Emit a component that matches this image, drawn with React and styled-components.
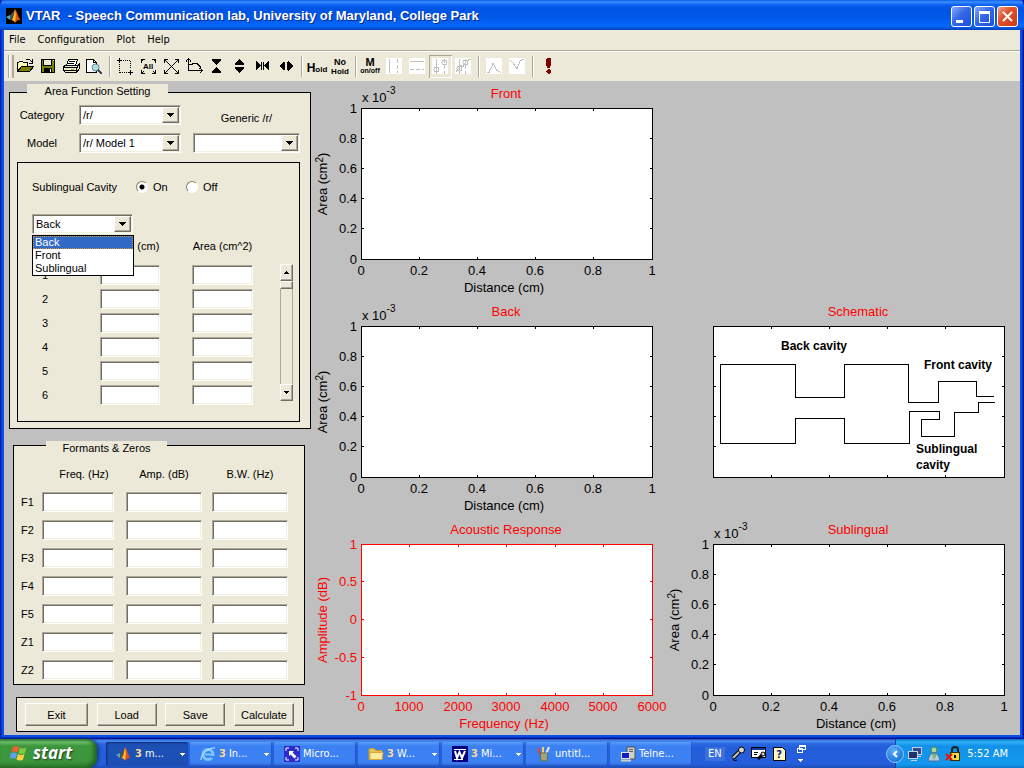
import React, { useState } from "react";
import styled, { createGlobalStyle, css } from "styled-components";

const face = "#ece9d8";
const uiFont = '"Liberation Sans", Arial, sans-serif';
const shellFont = '"DejaVu Sans Condensed", "DejaVu Sans", sans-serif';

const GlobalStyle = createGlobalStyle`
  * { box-sizing: border-box; }
  body { margin: 0; background: #c0c0c0; font: 11px/14px ${uiFont}; color: #000; }
  button, input, select { font: inherit; color: inherit; border-radius: 0; }
  svg { display: block; }
`;

const sunken = css`
  border: 1px solid;
  border-color: #aca899 #fff #fff #aca899;
  box-shadow: inset 1px 1px #716f64, inset -1px -1px #f1efe2;
`;
const raised = css`
  background: ${face};
  border: 1px solid;
  border-color: #fff #716f64 #716f64 #fff;
  box-shadow: inset -1px -1px #aca899;
`;

/* ---------- window ---------- */
const Desktop = styled.div`
  min-height: 100vh;
  display: flex;
  flex-direction: column;
`;
const Window = styled.main`
  flex: 1;
  display: flex;
  flex-direction: column;
  padding: 0 4px 4px;
  background: #0a50e4;
  box-shadow: inset 1px 0 #0a1fb4, inset 2px 0 #0838d0, inset -1px 0 #00138c, inset -2px 0 #0830c8, inset 0 -1px #00138c, inset 0 -2px #0830c8;
`;
const TitleBar = styled.header`
  height: 30px;
  margin: 0 -4px;
  padding: 2px 6px 0;
  display: flex;
  align-items: center;
  gap: 4px;
  border-radius: 6px 6px 0 0;
  background: linear-gradient(#0a5ce8 0, #3c8efc 2px, #0a5ff0 5px, #0054e3 9px, #0058ea 18px, #0668fc 26px, #0454dc 28px, #0340b8 30px);
`;
const Title = styled.h1`
  flex: 1;
  margin: 0;
  font: bold 13px/16px ${uiFont};
  white-space: pre;
  color: #fff;
  text-shadow: 1px 1px #0a2a8c;
`;
const CaptionButtons = styled.div`
  display: flex;
  gap: 2px;
`;
const CaptionButton = styled.button`
  width: 21px;
  height: 21px;
  padding: 0;
  display: grid;
  place-items: center;
  border: 1px solid #fff;
  border-radius: 3px;
  background: ${(p) =>
    p.$close
      ? "linear-gradient(135deg, #f0a088, #e2502c 40%, #c83c14)"
      : "linear-gradient(135deg, #86a8f4, #3468e8 45%, #1c50d8)"};
`;
const MenuBar = styled.nav`
  height: 20px;
  padding: 0 5px;
  display: flex;
  align-items: center;
  gap: 12px;
  background: ${face};
`;
const MenuItem = styled.button`
  padding: 0;
  border: 0;
  background: none;
  font: 11px/16px ${shellFont};
`;
const ToolBar = styled.div`
  height: 31px;
  padding: 0 4px;
  display: flex;
  align-items: center;
  background: ${face};
  border-top: 1px solid #aca899;
  box-shadow: inset 0 1px #fff;
`;
const Gripper = styled.span`
  width: 6px;
  height: 23px;
  border: solid #aca899;
  border-width: 0 1px;
  border-right-width: 2px;
  box-shadow: inset 1px 0 #fff;
`;
const Divider = styled.span`
  width: 2px;
  height: 21px;
  margin: 0 3px;
  border-left: 1px solid #aca899;
  border-right: 1px solid #fff;
`;
const Tool = styled.button`
  width: 23px;
  height: 23px;
  padding: 0;
  border: 0;
  background: none;
  box-shadow: ${(p) => (p.$pressed ? "inset 1px 1px #aca899, inset -1px -1px #fff" : "none")};
`;

const Workspace = styled.div`
  flex: 1;
  padding: 3px 2px 2px 5px;
  display: grid;
  grid-template-columns: 302px minmax(0, 1fr);
  column-gap: 3px;
  align-items: start;
  background: #c0c0c0;
`;

/* ---------- left side ---------- */
const SideColumn = styled.section`
  display: flex;
  flex-direction: column;
  gap: 12px;
`;
const Group = styled.fieldset`
  min-width: 0;
  margin: 0;
  border: 1px solid #000;
  background: ${face};
`;
const Legend = styled.legend`
  padding: 0;
  line-height: 14px;
  background: ${face};
`;
const LegendText = styled.span`
  display: block;
  text-align: center;
`;
const AreaGroup = styled(Group)`
  padding: 5px 10px 6px 7px;
  ${Legend} { width: 141px; height: 16px; margin-left: 10px; }
`;
const FormantGroup = styled(Group)`
  margin: 0 6px 0 4px;
  padding: 0 7px;
  ${Legend} { width: 121px; height: 8px; margin-left: 25px; }
`;
const ModelGrid = styled.div`
  display: grid;
  grid-template-columns: 50px 102px 1fr;
  gap: 8px 12px;
  align-items: center;
  text-align: center;
`;
const LowLabel = styled.label`
  align-self: end;
`;
const SelectBox = styled.span`
  display: grid;
  grid-template-columns: 1fr 19px;
  width: ${(p) => p.$width || "auto"};
  height: 20px;
`;
const SelectField = styled.select`
  ${sunken}
  grid-area: 1 / 1 / 2 / 3;
  appearance: none;
  width: 100%;
  padding: 0 20px 0 3px;
  background: #fff;
`;
const SelectArrow = styled.span`
  ${raised}
  grid-area: 1 / 2;
  margin: 2px 2px 2px 0;
  display: grid;
  place-items: center;
  pointer-events: none;
`;
const CavityBox = styled.div`
  margin-top: 9px;
  padding: 12px 6px 14px 14px;
  border: 1px solid #000;
`;
const RadioRow = styled.div`
  height: 24px;
  margin-bottom: 15px;
  display: flex;
  align-items: center;
`;
const RadioTitle = styled.span`
  width: 104px;
`;
const RadioLabel = styled.label`
  width: 50px;
  display: flex;
  align-items: center;
  gap: 5px;
`;
const Radio = styled.input`
  appearance: none;
  width: 12px;
  height: 12px;
  margin: 0;
  border-radius: 50%;
  border: 1px solid;
  border-color: #84806c #fff #fff #84806c;
  background: ${(p) => (p.checked ? "radial-gradient(circle, #000 0 2px, #fff 3px)" : "#fff")};
`;
const Combo = styled.div`
  position: relative;
  width: 101px;
`;
const Popup = styled.ul`
  position: absolute;
  z-index: 2;
  top: 21px;
  left: 0;
  width: 102px;
  margin: 0;
  padding: 0;
  list-style: none;
  border: 1px solid #000;
  background: #fff;
`;
const Option = styled.li`
  padding: 0 2px;
  line-height: 13px;
  color: ${(p) => (p.$on ? "#fff" : "#000")};
  background: ${(p) => (p.$on ? "#316ac5" : "#fff")};
  outline: ${(p) => (p.$on ? "1px dotted #ce953a" : "none")};
  outline-offset: -1px;
`;
const SectionRow = styled.div`
  display: flex;
  justify-content: space-between;
`;
const FieldTable = styled.table`
  table-layout: fixed;
  border-collapse: collapse;
  th, td { padding: 0; font-weight: normal; }
`;
const SectionTable = styled(FieldTable)`
  width: 221px;
  thead th { height: 29px; padding-top: 5px; vertical-align: top; }
  tbody th, td { height: 24px; }
  tbody th { padding-left: 10px; text-align: left; }
  tr > :nth-child(2) { padding-right: 32px; }
`;
const FormantTable = styled(FieldTable)`
  width: 267px;
  thead th { height: 39px; padding-top: 10px; }
  tbody th, td { height: 28px; }
  tbody th { text-align: left; }
  td:nth-child(2) { padding-right: 12px; }
  tr > :nth-child(3) { padding-right: 10px; }
`;
const Col = styled.col`
  width: ${(p) => p.$w}px;
`;
const Nowrap = styled.span`
  display: flex;
  justify-content: center;
  white-space: nowrap;
`;
const Field = styled.input`
  ${sunken}
  display: block;
  width: 100%;
  height: 20px;
  padding: 0 3px;
  background: #fff;
`;
const Scroll = styled.div`
  width: 13px;
  margin: 30px 0 6px;
  display: flex;
  flex-direction: column;
  border: solid #aca899;
  border-width: 0 1px;
`;
const ScrollButton = styled.button`
  ${raised}
  height: 17px;
  margin: 0 -1px;
  padding: 0;
  display: grid;
  place-items: center;
`;
const Thumb = styled.span`
  ${raised}
  height: 8px;
  margin: 0 -1px auto;
`;
const ActionBar = styled.div`
  margin: 0 7px;
  padding: 5px 9px 5px 8px;
  display: flex;
  justify-content: space-between;
  border: 1px solid #000;
  background: ${face};
`;
const ActionButton = styled.button`
  ${raised}
  width: ${(p) => (p.$wide ? 63 : 60)}px;
  height: 23px;
  padding: 0;
`;

/* ---------- plots ---------- */
const PlotGrid = styled.section`
  margin-top: -3px;
  display: grid;
  grid-template-columns: repeat(2, minmax(0, 1fr));
  row-gap: 2px;
`;
const PlotCell = styled.figure`
  margin: 0;
  grid-area: ${(p) => `${p.$row} / ${p.$col}`};
`;
const PlotSvg = styled.svg`
  width: 100%;
  height: auto;
  overflow: visible;
  font: 13px ${uiFont};
`;

const frame = { x: 47, y: 27, w: 291, h: 151 };

function Plot({ row, col, title, xLabel, yLabel, xTicks, yTicks, exponent, ink = "#000", children }) {
  const { x, y, w, h } = frame;
  const px = (i) => Math.floor(x + (w * i) / (xTicks.length - 1));
  const py = (i) => Math.floor(y + h - (h * i) / (yTicks.length - 1));
  return (
    <PlotCell $row={row} $col={col}>
      <PlotSvg viewBox="0 0 352 216" role="img" aria-label={title}>
        <g shapeRendering="crispEdges" stroke={ink} fill="none">
          <rect x={x + 0.5} y={y + 0.5} width={w} height={h} fill="#fff" />
          {xTicks.map((t, i) => (
            <path key={i} d={`M${px(i) + 0.5} ${y}v3M${px(i) + 0.5} ${y + h + 1}v-3`} />
          ))}
          {yTicks.map((t, i) => (
            <path key={i} d={`M${x} ${py(i) + 0.5}h3M${x + w + 1} ${py(i) + 0.5}h-3`} />
          ))}
        </g>
        <text x="192" y="17" textAnchor="middle" fill="#f00">{title}</text>
        {exponent && (
          <text x="48" y="21">
            x 10<tspan dy="-8" fontSize="10">{exponent}</tspan>
          </text>
        )}
        <g fill={ink}>
          {xTicks.map((t, i) => t && (
            <text key={i} x={px(i)} y="194" textAnchor="middle">{t}</text>
          ))}
          {yTicks.map((t, i) => t && (
            <text key={i} x="43" y={py(i) + 5} textAnchor="end">{t}</text>
          ))}
          {xLabel && <text x="190" y="211" textAnchor="middle">{xLabel}</text>}
          {yLabel && (
            <text transform="translate(13 103) rotate(-90)" textAnchor="middle">{yLabel}</text>
          )}
        </g>
        {children}
      </PlotSvg>
    </PlotCell>
  );
}

const unitX = ["0", "0.2", "0.4", "0.6", "0.8", "1"];
const blank = ["", "", "", "", "", ""];
const areaLabel = (
  <>
    Area (cm<tspan dy="-4" fontSize="10">2</tspan>
    <tspan dy="4">)</tspan>
  </>
);

/* ---------- toolbar glyphs ---------- */
const G = ({ children, off }) => (
  <svg width="23" height="23" viewBox="0 0 23 23" fill="none" stroke={off ? "#c0c0c0" : "#000"} shapeRendering="crispEdges">
    {off && <rect x="3" y="3" width="16" height="16" fill="#fff" stroke="none" />}
    {children}
  </svg>
);
const glyphText = { fill: "#000", stroke: "none", fontWeight: "bold", fontFamily: "Liberation Sans, sans-serif" };

const toolGroups = [
  [
    ["Open", <G><path d="M3.5 16.5v-9h1l1-1h3l1 1h4v4" fill="#ffffb0" /><path d="M3.5 16.5l4-5h12l-4 5z" fill="#808000" /><path d="M11.5 5.5l1-1h3l3 3M18.5 4v4h-4" /></G>],
    ["Save", <G><rect x="4.500" y="4.500" width="13" height="13" fill="#808000" /><rect x="6.500" y="4.500" width="8" height="6" fill={face} /><path d="M7 13.500h8M7 14.500h8M7 15.500h8M7 16.500h8" /><path d="M13.500 14v3" stroke="#fff" /><path d="M16.500 5v1" stroke="#fff" /></G>],
    ["Print", <G><path d="M6.500 10.500l2-6h9l-2 6z" fill="#fff" /><path d="M9 6.500h6M8 8.500h6" /><path d="M3.500 11.500l2-1h12l2-2v5l-3 4h-11l-2-2z" fill={face} /><path d="M4 12.500h13l2-3M4 15.500h13M16.500 13v4" /><path d="M11 14.500h3" stroke="#b8a800" /></G>],
    ["Print preview", <G><path d="M3.500 4.500h7l3 3v10h-10z" fill="#fff" /><path d="M10.500 4.500v3h3" /><circle cx="12.500" cy="12.500" r="3.500" fill="#a8e0e8" stroke="#708090" shapeRendering="auto" /><path d="M15 15l4 4" strokeWidth="2" stroke="#404858" /></G>],
  ],
  [
    ["Zoom box", <G><path d="M3 5.500h5M5.500 3v5M14 17.500h5M16.500 15v5" /><path d="M9 5.500h8M5.500 9v9M16.500 6v8M6 17.500h7" strokeDasharray="1 1" /></G>],
    ["Show all", <G><path d="M4.500 8V4.500H8M4.500 4.500l2 2M15 4.500h3.500V8M18.500 4.500l-2 2M4.500 15v3.500H8M4.500 18.500l2-2M15 18.500h3.500V15M18.500 18.500l-2-2" /><text x="11" y="14" fontSize="8" textAnchor="middle" {...glyphText}>All</text></G>],
    ["Expand", <G><path d="M4.500 8V4.500H8M15 4.500h3.500V8M4.500 15v3.500H8M15 18.500h3.500V15M4.500 4.500l14 14M18.500 4.500l-14 14" /></G>],
    ["Axes", <G><path d="M5.500 16V4M3 6.500l2.500-3 2.500 3M5 15.500h14M16.500 13l3 2.500-3 3M6 9.500h3l1-1h4l3 3v2" /></G>],
    ["Compress vertically", <G><path d="M6 4.500h9M6 17.500h9" /><path d="M6 5h9l-4.500 5zM6 17h9l-4.500-5z" fill="#000" stroke="none" /></G>],
    ["Expand vertically", <G><path d="M6 9h9l-4.500-5zM6 13h9l-4.500 5z" fill="#000" stroke="none" /><path d="M6 9.500h9M6 12.500h9" /></G>],
    ["Compress horizontally", <G><path d="M4 6v9l5-4.500zM17 6v9l-5-4.500z" fill="#000" stroke="none" /><path d="M9.500 7v8M11.500 7v8" /></G>],
    ["Expand horizontally", <G><path d="M9 6v10l-5-5zM13 6v10l5-5z" fill="#000" stroke="none" /><path d="M9.500 7v8M12.500 7v8" /></G>],
  ],
  [
    ["Hold", <G><text x="11" y="17" fontSize="12" textAnchor="middle" {...glyphText}>H<tspan fontSize="8">old</tspan></text></G>],
    ["No hold", <G><text x="11" y="10" fontSize="9" textAnchor="middle" {...glyphText}>No</text><text x="11" y="19" fontSize="8" textAnchor="middle" {...glyphText}>Hold</text></G>],
  ],
  [
    ["Markers on/off", <G><text x="10" y="11" fontSize="11" textAnchor="middle" {...glyphText}>M</text><text x="10" y="18" fontSize="7" textAnchor="middle" {...glyphText}>on/off</text></G>],
    ["Vertical cursors", <G off><path d="M6.500 4v14" /><path d="M14.500 4v14" strokeDasharray="4 2" /></G>],
    ["Horizontal cursors", <G off><path d="M4 6.500h14" /><path d="M4 14.500h14" strokeDasharray="4 2" /></G>],
    ["Track", <G off><path d="M7.500 4v15" /><path d="M15.500 4v15" strokeDasharray="4 2" /><circle cx="7.500" cy="14.500" r="2.500" /><circle cx="15.500" cy="7.500" r="2.500" /></G>, true],
    ["Track data", <G off><path d="M7.500 4v15M4 17l5-7 2 2 3-6 5-2" /><path d="M13.500 4v15" strokeDasharray="4 2" /><circle cx="7.500" cy="13.500" r="2.500" /><circle cx="13.500" cy="7.500" r="2.500" /></G>],
  ],
  [
    ["Next peak", <G off><path d="M4 17.500h2l4-9 4 7 4 2" /></G>],
    ["Next valley", <G off><path d="M4 5l3 3 4 6 3-8 4-2" /></G>],
  ],
  [
    ["Stop", <G><path d="M10 3h3l1 1v5l-1 4h-3l-1-4V4zM11 14h1l2 2v1l-2 2h-1l-2-2v-1z" fill="#800000" stroke="none" /></G>],
  ],
];

const MatlabLogo = ({ boxed, size = 16 }) => (
  <svg width={size} height={size} viewBox="0 0 16 16">
    {boxed && <rect width="16" height="16" fill="#000" />}
    <path d="M0 9l4-2 2 2-2 3z" fill="#5ba4b4" />
    <path d="M4 7l3-3 2-3-2 8-3 3z" fill="#35545c" />
    <path d="M9 1c2 2 3 8 6 12-2-2-4-1-6 2-1-2-2-3-4-3 2-1 3-8 4-11z" fill="#d9531e" />
    <path d="M9 2c1 3 1 8 0 12-1-1-2-2-3-2 2-2 2-7 3-10z" fill="#ffc028" />
  </svg>
);
const Triangle = ({ up, fill = "#000", small }) => (
  <svg width={small ? 5 : 7} height={small ? 3 : 4} viewBox={small ? "1 0 5 3" : "0 0 7 4"} shapeRendering="crispEdges">
    {small
      ? <path d={up ? "M3 0h1v1h1v1h1v1H1V2h1V1h1z" : "M1 0h5v1H5v1H4v1H3V2H2V1H1z"} fill={fill} />
      : <path d="M0 0h7v1H6v1H5v1H4v1H3V3H2V2H1V1H0z" fill={fill} />}
  </svg>
);

/* ---------- taskbar ---------- */
const Taskbar = styled.footer`
  height: 30px;
  display: flex;
  align-items: stretch;
  font: 11px/14px ${shellFont};
  color: #fff;
  background: linear-gradient(#1f4fb8 0, #4a8cf4 2px, #2a66e0 5px, #245edb 9px, #245edb 25px, #1c48ac 30px);
`;
const StartButton = styled.button`
  width: 97px;
  padding: 0 0 2px 10px;
  display: flex;
  align-items: center;
  gap: 5px;
  border: 0;
  border-radius: 0 10px 12px 0;
  font: italic bold 17px/24px "Open Sans", "Noto Sans", sans-serif;
  color: #fff;
  text-shadow: 1px 1px 2px #1c401c;
  background: linear-gradient(#2c7c2c 0, #6cbc6c 3px, #3c963c 7px, #3c963c 22px, #2a742a 30px);
  box-shadow: inset -3px -1px 4px #1e601e, 2px 0 3px #173c94;
`;
const Tasks = styled.div`
  flex: 0 1 586px;
  min-width: 0;
  margin-left: 9px;
  display: flex;
  align-items: center;
  gap: 2px;
`;
const Task = styled.button`
  flex: 1;
  min-width: 0;
  height: 24px;
  padding: 0 3px 0 10px;
  display: flex;
  align-items: center;
  gap: 3px;
  border: 0;
  border-radius: 2px;
  white-space: nowrap;
  text-align: left;
  background: ${(p) => (p.$active ? "#1c50b4" : "linear-gradient(#5c9cfc 0, #3c81f3 4px, #3c81f3 20px, #2c68d8 24px)")};
  box-shadow: ${(p) => (p.$active ? "inset 1px 1px 2px #0c2c74" : "inset -1px -1px #2458c4")};
`;
const TaskText = styled.span`
  flex: 1;
`;
const Count = styled.b`
  color: #fcd890;
`;
const LanguageBar = styled.div`
  margin-left: 13px;
  display: flex;
  align-items: center;
  gap: 5px;
`;
const Language = styled.span`
  padding: 0 3px;
  background: #3a70e0;
`;
const Tray = styled.div`
  width: 129px;
  margin-left: auto;
  display: flex;
  align-items: center;
  gap: 3px;
  padding-right: 16px;
  border-left: 1px solid #0c48a0;
  background: linear-gradient(#1070c8 0, #30b0f8 3px, #1290e8 7px, #129aee 25px, #0c70c0 30px);
`;
const TrayToggle = styled.button`
  flex: none;
  width: 18px;
  height: 18px;
  margin-left: -10px;
  padding: 0;
  display: grid;
  place-items: center;
  border: 1px solid #8cc8fc;
  border-radius: 50%;
  background: radial-gradient(circle at 40% 30%, #58b0fc, #0c60d0);
`;
const Clock = styled.time`
  margin-left: auto;
  white-space: nowrap;
`;

const Ico = (p) => <svg width="16" height="16" viewBox="0 0 16 16" {...p} />;
const tasks = [
  { n: "3", text: "m...", more: true, active: true, icon: <MatlabLogo /> },
  { n: "3", text: "In...", more: true, icon: <Ico><circle cx="8" cy="8.500" r="5" fill="none" stroke="#7cc8fc" strokeWidth="3" /><path d="M5 8.500h8" stroke="#7cc8fc" strokeWidth="2" /><path d="M11 10h4v2h-4z" fill="#3c81f3" /><path d="M1 14C0 9 9 1 15 2" fill="none" stroke="#c8ecff" /></Ico> },
  { text: "Micro...", icon: <Ico><rect width="16" height="16" fill="#2c2cc8" /><path d="M2 5V2h3M11 2h3v3M2 11v3h3M11 14h3v-3" stroke="#fff" fill="none" /><path d="M5 5h5L8.500 6.500l4 4-2 2-4-4L5 10z" fill="#fff" /></Ico> },
  { n: "3", text: "W...", more: true, icon: <Ico><path d="M1 3.500l1-1h4l2 2h6v9H1z" fill="#e8c050" stroke="#c89828" /><path d="M2 6.500h13l-1 7H2z" fill="#ffec98" stroke="#d8a838" /></Ico> },
  { n: "3", text: "Mi...", more: true, icon: <Ico><rect width="16" height="16" fill="#00007c" /><path d="M2 3.500h12M2 13.500h9" stroke="#fff" /><path d="M3 5l2 7 2.500-6L10 12l3-7" fill="none" stroke="#fff" strokeWidth="2" /></Ico> },
  { text: "untitl...", icon: <Ico><path d="M4 8l-2-6" stroke="#e84020" strokeWidth="2" /><path d="M7 8V1" stroke="#f8d060" strokeWidth="2" /><path d="M10 8l3-7" stroke="#e8e8e8" strokeWidth="2" /><path d="M4 7h8l-1 8H5z" fill="#90a890" stroke="#586858" /><path d="M7 8v6" stroke="#f09030" /></Ico> },
  { text: "Telne...", icon: <Ico><path d="M7 1h7l1 1v11H7z" fill="#d0d0c8" stroke="#505050" /><path d="M9 3.500h4M9 5.500h4" stroke="#606060" /><rect x="1.500" y="6.500" width="8" height="6" fill="#1020c0" stroke="#e0e0d8" /><path d="M1 14.500h10" stroke="#d0d0c8" strokeWidth="2" /></Ico> },
];

function Choice({ label, id, options, width }) {
  return (
    <SelectBox $width={width}>
      <SelectField id={id} aria-label={label}>
        {options.map((o) => <option key={o}>{o}</option>)}
      </SelectField>
      <SelectArrow><Triangle /></SelectArrow>
    </SelectBox>
  );
}

export default function App() {
  const [cavity, setCavity] = useState("On");
  return (
    <>
      <GlobalStyle />
      <Desktop>
        <Window>
          <TitleBar>
            <MatlabLogo boxed />
            <Title>{"VTAR  - Speech Communication lab, University of Maryland, College Park"}</Title>
            <CaptionButtons>
              <CaptionButton aria-label="Minimize"><svg width="15" height="15"><path d="M2 11h7v3H2z" fill="#fff" /></svg></CaptionButton>
              <CaptionButton aria-label="Maximize"><svg width="15" height="15"><path d="M2.500 3v10.500h10V3" fill="none" stroke="#fff" /><path d="M2 2h11v3H2z" fill="#fff" /></svg></CaptionButton>
              <CaptionButton $close aria-label="Close"><svg width="15" height="15"><path d="M3 3l9 9M12 3l-9 9" stroke="#fff" strokeWidth="2" /></svg></CaptionButton>
            </CaptionButtons>
          </TitleBar>
          <MenuBar>
            {["File", "Configuration", "Plot", "Help"].map((m) => <MenuItem key={m}>{m}</MenuItem>)}
          </MenuBar>
          <ToolBar role="toolbar">
            <Gripper />
            {toolGroups.map((group, i) => (
              <React.Fragment key={i}>
                {i > 0 && <Divider />}
                {group.map(([name, glyph, pressed]) => (
                  <Tool key={name} aria-label={name} $pressed={pressed}>{glyph}</Tool>
                ))}
              </React.Fragment>
            ))}
          </ToolBar>
          <Workspace>
            <SideColumn>
              <AreaGroup>
                <Legend><LegendText>Area Function Setting</LegendText></Legend>
                <ModelGrid>
                  <label htmlFor="category">Category</label>
                  <Choice id="category" options={["/r/"]} />
                  <LowLabel htmlFor="generic">Generic /r/</LowLabel>
                  <label htmlFor="model">Model</label>
                  <Choice id="model" options={["/r/ Model 1"]} />
                  <Choice id="generic" options={[""]} />
                </ModelGrid>
                <CavityBox>
                  <RadioRow role="radiogroup" aria-label="Sublingual Cavity">
                    <RadioTitle>Sublingual Cavity</RadioTitle>
                    {["On", "Off"].map((v) => (
                      <RadioLabel key={v}>
                        <Radio type="radio" name="cavity" checked={cavity === v} onChange={() => setCavity(v)} />
                        {v}
                      </RadioLabel>
                    ))}
                  </RadioRow>
                  <Combo>
                    <Choice label="Cavity section" options={["Back", "Front", "Sublingual"]} width="101px" />
                    <Popup role="listbox" aria-label="Cavity section">
                      {["Back", "Front", "Sublingual"].map((o, i) => (
                        <Option key={o} role="option" aria-selected={i === 0} $on={i === 0}>{o}</Option>
                      ))}
                    </Popup>
                  </Combo>
                  <SectionRow>
                    <SectionTable>
                      <colgroup><Col $w={68} /><Col $w={92} /><Col $w={61} /></colgroup>
                      <thead>
                        <tr><th /><th scope="col"><Nowrap>Length (cm)</Nowrap></th><th scope="col"><Nowrap>Area (cm^2)</Nowrap></th></tr>
                      </thead>
                      <tbody>
                        {[1, 2, 3, 4, 5, 6].map((n) => (
                          <tr key={n}>
                            <th scope="row">{n}</th>
                            <td><Field aria-label={`Length ${n}`} /></td>
                            <td><Field aria-label={`Area ${n}`} /></td>
                          </tr>
                        ))}
                      </tbody>
                    </SectionTable>
                    <Scroll>
                      <ScrollButton aria-label="Scroll up"><Triangle up small /></ScrollButton>
                      <Thumb />
                      <ScrollButton aria-label="Scroll down"><Triangle small /></ScrollButton>
                    </Scroll>
                  </SectionRow>
                </CavityBox>
              </AreaGroup>

              <FormantGroup>
                <Legend><LegendText>Formants &amp; Zeros</LegendText></Legend>
                <FormantTable>
                  <colgroup><Col $w={21} /><Col $w={84} /><Col $w={86} /><Col $w={76} /></colgroup>
                  <thead>
                    <tr><th /><th scope="col">Freq. (Hz)</th><th scope="col">Amp. (dB)</th><th scope="col">B.W. (Hz)</th></tr>
                  </thead>
                  <tbody>
                    {["F1", "F2", "F3", "F4", "F5", "Z1", "Z2"].map((n) => (
                      <tr key={n}>
                        <th scope="row">{n}</th>
                        <td><Field aria-label={`${n} frequency`} /></td>
                        <td><Field aria-label={`${n} amplitude`} /></td>
                        <td><Field aria-label={`${n} bandwidth`} /></td>
                      </tr>
                    ))}
                  </tbody>
                </FormantTable>
              </FormantGroup>

              <ActionBar>
                <ActionButton $wide>Exit</ActionButton>
                <ActionButton>Load</ActionButton>
                <ActionButton>Save</ActionButton>
                <ActionButton>Calculate</ActionButton>
              </ActionBar>
            </SideColumn>

            <PlotGrid>
              <Plot row={1} col={1} title="Front" xLabel="Distance (cm)" yLabel={areaLabel} xTicks={unitX} yTicks={unitX} exponent="-3" />
              <Plot row={2} col={1} title="Back" xLabel="Distance (cm)" yLabel={areaLabel} xTicks={unitX} yTicks={unitX} exponent="-3" />
              <Plot row={2} col={2} title="Schematic" xTicks={blank} yTicks={blank}>
                <path
                  d="M54.500 144.500V65.500H129.500V98.500H178.500V65.500H242.500V103.500H272.500V82.500H310.500V97.500H328M54.500 144.500H129.500V119.500H178.500V144.500H243.500V112.500H273.500V120.500H255.500V137.500H288.500V113.500H312.500V103.500H329"
                  fill="none" stroke="#000" shapeRendering="crispEdges"
                />
                <g fontSize="12" fontWeight="bold">
                  <text x="115" y="51">Back cavity</text>
                  <text x="258" y="70">Front cavity</text>
                  <text x="250" y="154">Sublingual</text>
                  <text x="250" y="170">cavity</text>
                </g>
              </Plot>
              <Plot
                row={3} col={1} ink="#f00" title="Acoustic Response" xLabel="Frequency (Hz)" yLabel="Amplitude (dB)"
                xTicks={["0", "1000", "2000", "3000", "4000", "5000", "6000"]} yTicks={["-1", "-0.5", "0", "0.5", "1"]}
              />
              <Plot row={3} col={2} title="Sublingual" xLabel="Distance (cm)" yLabel={areaLabel} xTicks={unitX} yTicks={unitX} exponent="-3" />
            </PlotGrid>
          </Workspace>
        </Window>

        <Taskbar>
          <StartButton>
            <svg width="18" height="18" viewBox="0 0 18 18">
              <path d="M3 3q3-2 6 0L7.500 8.500q-3-2-6 0z" fill="#f06030" />
              <path d="M10 3.500q3 2 6.500 0L15 9q-3 2-6.500 0z" fill="#80c840" />
              <path d="M1 9.500q3-2 6 0L5.500 15q-2.500-2-6 0z" fill="#60a0f8" />
              <path d="M8 10q3 2 6.500 0L13 15.500q-3 2-6.500 0z" fill="#fcd040" />
            </svg>
            start
          </StartButton>
          <Tasks>
            {tasks.map((t) => (
              <Task key={t.text} $active={t.active}>
                {t.icon}
                {t.n && <Count>{t.n}</Count>}
                <TaskText>{t.text}</TaskText>
                {t.more && <Triangle fill="#fff" small />}
              </Task>
            ))}
          </Tasks>
          <LanguageBar>
            <Language>EN</Language>
            <Ico><path d="M3 12l7-7" stroke="#000" strokeWidth="4" /><path d="M3 12l7-7" stroke="#c8c8c0" strokeWidth="2" /><circle cx="11.500" cy="4" r="3" fill="#d8d8d0" stroke="#000" /><path d="M3 12q0 4 4 2" fill="none" stroke="#000" /></Ico>
            <Ico><rect x="0.500" y="1.500" width="14" height="10" fill="#fff" stroke="#000" /><path d="M1 3h13" stroke="#1838a8" strokeWidth="2" /><path d="M3 6.500h4M3 8.500h3" stroke="#000" /><path d="M7 13l5-5" stroke="#000" strokeWidth="3" /><circle cx="12" cy="8" r="2" fill="#d8d8d0" stroke="#000" /></Ico>
            <Ico><path d="M1.500 1.500h9l3 3v10h-12z" fill="#fff8c0" stroke="#000" /><text x="7" y="12" fontSize="11" fontWeight="bold" textAnchor="middle" fill="#102090">?</text></Ico>
            <svg width="16" height="20" viewBox="0 0 16 20" shapeRendering="crispEdges"><path d="M6.500 1.500h6v4h-6zM6 2h7M4.500 4.500h5v4h-5z" fill="#245edb" stroke="#fff" /><path d="M5 15h5v1H9v1H8v1H7v-1H6v-1H5z" fill="#fff" /></svg>
          </LanguageBar>
          <Tray>
            <TrayToggle aria-label="Show hidden icons"><svg width="8" height="8"><path d="M6 1L3 4l3 3" fill="none" stroke="#fff" strokeWidth="2" /></svg></TrayToggle>
            <Ico><rect x="5.500" y="1.500" width="9" height="7" fill="#304890" stroke="#c8d0e0" /><rect x="1.500" y="5.500" width="9" height="7" fill="#203070" stroke="#c8d0e0" /><path d="M4 14.500h6M10 10.500h4" stroke="#c8d0e0" /></Ico>
            <Ico><circle cx="8" cy="4" r="3" fill="#a8d8a0" stroke="#508850" /><path d="M2 15q1-8 6-8t6 8z" fill="#b0c8e0" stroke="#4870a0" /><path d="M6 8l2 6 3-6z" fill="#78b868" /></Ico>
            <Ico><path d="M7 7V4a3 3 0 0 1 6 0v3" fill="none" stroke="#202020" strokeWidth="2" /><rect x="5.500" y="6.500" width="9" height="8" fill="#f0d840" stroke="#383000" /><path d="M10 9v3" stroke="#000" strokeWidth="2" /><path d="M1 8l6 6M7 8l-6 6" stroke="#e81010" strokeWidth="2" /></Ico>
            <Clock>5:52 AM</Clock>
          </Tray>
        </Taskbar>
      </Desktop>
    </>
  );
}
